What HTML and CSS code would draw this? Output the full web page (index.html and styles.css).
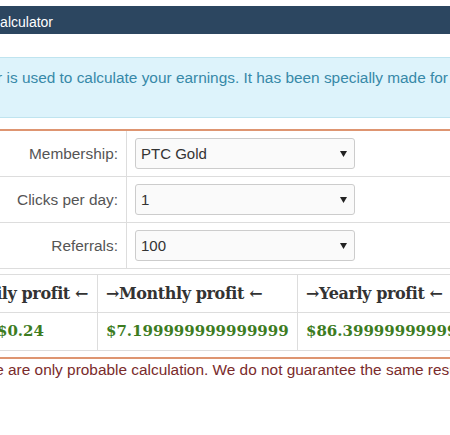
FILE: index.html
```html
<!DOCTYPE html>
<html lang="en">
<head>
<meta charset="utf-8">
<title>PTC Calculator</title>
<link rel="stylesheet" href="styles.css">
</head>
<body>
<div class="page">
  <div class="panel-heading">Calculator</div>
  <div class="alert">This calculator is used to calculate your earnings. It has been specially made for PTC members.</div>

  <div class="form-block">
    <table class="form">
      <tr>
        <td class="label">Membership:</td>
        <td class="control">
          <span class="select-wrap">
            <select class="select"><option>PTC Gold</option><option>Standard</option></select>
            <svg class="caret" width="7" height="6" viewBox="0 0 7 6"><path d="M0 0h7L3.5 6z" fill="#222"/></svg>
          </span>
        </td>
      </tr>
      <tr>
        <td class="label">Clicks per day:</td>
        <td class="control">
          <span class="select-wrap">
            <select class="select"><option>1</option><option>2</option></select>
            <svg class="caret" width="7" height="6" viewBox="0 0 7 6"><path d="M0 0h7L3.5 6z" fill="#222"/></svg>
          </span>
        </td>
      </tr>
      <tr>
        <td class="label">Referrals:</td>
        <td class="control">
          <span class="select-wrap">
            <select class="select"><option>100</option><option>200</option></select>
            <svg class="caret" width="7" height="6" viewBox="0 0 7 6"><path d="M0 0h7L3.5 6z" fill="#222"/></svg>
          </span>
        </td>
      </tr>
    </table>
  </div>

  <table class="results">
    <colgroup>
      <col class="w1">
      <col class="w2">
      <col class="w3">
    </colgroup>
    <tr>
      <th class="c1"><span class="head-text">→Daily profit ←</span></th>
      <th>→Monthly profit ←</th>
      <th>→Yearly profit ←</th>
    </tr>
    <tr>
      <td>$0.24</td>
      <td>$7.199999999999999</td>
      <td>$86.39999999999999</td>
    </tr>
  </table>

  <p class="note">These are only probable calculation. We do not guarantee the same results.</p>
</div>
</body>
</html>
```

FILE: styles.css
```css
html, body {
  margin: 0;
  padding: 0;
  overflow: hidden;
  background: #fff;
}

body {
  font-family: "Liberation Sans", Arial, sans-serif;
  font-size: 15.4px;
  color: #333;
}

.page {
  margin-left: -110px;
  width: 680px;
}

.panel-heading {
  margin-top: 6px;
  background: #2c4660;
  color: #fff;
  font-size: 14px;
  line-height: 20px;
  padding: 6px 0 2px 100px;
  white-space: nowrap;
}

.alert {
  margin-top: 23px;
  background: #ddf3fb;
  border: 1px solid #bfe4ef;
  color: #3789a8;
  line-height: 20px;
  padding: 10px 0 29px 12px;
  white-space: nowrap;
}

.form-block {
  margin-top: 11px;
  border-top: 2px solid #de9571;
}

.form {
  width: 100%;
  border-collapse: collapse;
}

.form td {
  border-bottom: 1px solid #ddd;
  padding: 7px 0;
}

.form .label {
  width: 228px;
  padding-right: 8px;
  text-align: right;
  color: #555;
  border-right: 1px solid #ddd;
  white-space: nowrap;
}

.form .control {
  padding-left: 8px;
}

.select-wrap {
  position: relative;
  display: inline-block;
  vertical-align: top;
}

.select {
  appearance: none;
  -webkit-appearance: none;
  display: block;
  width: 220px;
  height: 31px;
  margin: 0;
  padding: 0 20px 0 5px;
  border: 1px solid #ccc;
  border-radius: 3px;
  background: #fafafa;
  color: #333;
  font-family: "Liberation Sans", Arial, sans-serif;
  font-size: 15px;
}

.caret {
  position: absolute;
  right: 8px;
  top: 13px;
  pointer-events: none;
}

.results {
  margin-left: 98px;
  margin-top: 5px;
  width: 509px;
  border-collapse: collapse;
  table-layout: fixed;
}

.results .w1 { width: 109px; }
.results .w2 { width: 200px; }
.results .w3 { width: 200px; }

.results th,
.results td {
  border: 1px solid #ddd;
  padding: 8px 8px;
  line-height: 21px;
  text-align: left;
  white-space: nowrap;
  font-family: "DejaVu Serif", Georgia, serif;
  font-weight: bold;
}

.results th {
  color: #333;
  font-size: 16px;
  letter-spacing: -0.4px;
}

.results th.c1 {
  direction: rtl;
  text-align: right;
  padding-right: 9px;
}

.head-text {
  display: inline-block;
  direction: ltr;
  unicode-bidi: isolate;
}

.results td {
  color: #3d7c1f;
  font-size: 15px;
}

.note {
  margin: 6px 0 0;
  border-top: 2px solid #de9571;
  padding: 1px 0 0 71px;
  line-height: 20px;
  color: #7a2b2b;
  white-space: nowrap;
}
```
